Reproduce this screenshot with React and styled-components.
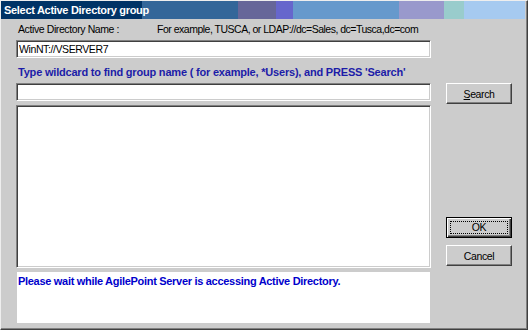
import React from 'react';
// styles
import styled, { createGlobalStyle } from 'styled-components';

const GlobalStyle = createGlobalStyle`
  html, body {
    margin: 0;
    padding: 0;
    background: #cccccc;
  }
  body {
    font-family: 'Liberation Sans', Arial, sans-serif;
    font-size: 10.5px;
    letter-spacing: -0.4px;
    color: #000;
  }
`;

const App = () => {
  return (
    <>
      <GlobalStyle />
      <Window>
        <TitleBar>Select Active Directory group</TitleBar>
        <Body>
          <LabelRow>
            <span>Active Directory Name :</span>
            <Hint>For example, TUSCA, or LDAP://dc=Sales, dc=Tusca,dc=com</Hint>
          </LabelRow>
          <Input defaultValue='WinNT://VSERVER7' />
          <BlueLabel>
            Type wildcard to find group name ( for example, *Users), and PRESS 'Search'
          </BlueLabel>
          <Input defaultValue='' />
          <Button>
            <u>S</u>earch
          </Button>
          <ListBox />
          <Buttons>
            <Button isDefault>
              <Focus>OK</Focus>
            </Button>
            <Button>Cancel</Button>
          </Buttons>
          <Status>Please wait while AgilePoint Server is accessing Active Directory.</Status>
        </Body>
      </Window>
    </>
  );
};

const Window = styled.div`
  box-sizing: border-box;
  width: 528px;
  height: 330px;
  display: flex;
  flex-direction: column;
  background: #cccccc;
  border: 1px solid;
  border-color: #eeeeee #404040 #404040 #eeeeee;
  box-shadow: inset -1px -1px 0 #808080;
  padding: 0 1px 0 0;
`;

const TitleBar = styled.div`
  height: 18px;
  line-height: 18px;
  padding-left: 3px;
  color: #fff;
  font-size: 11px;
  font-weight: bold;
  letter-spacing: -0.3px;
  white-space: nowrap;
  background: linear-gradient(
    to right,
    #003366 0 141px,
    #336699 141px 237px,
    #666699 237px 275px,
    #6666cc 275px 292px,
    #6699cc 292px 398px,
    #9999cc 398px 443px,
    #99cccc 443px 463px,
    #a6caf0 463px 524px,
    #cccccc 524px
  );
`;

const Body = styled.div`
  display: grid;
  grid-template-columns: 415px 66px;
  column-gap: 15px;
  padding-left: 15px;
  align-items: start;
`;

const LabelRow = styled.div`
  grid-column: 1 / span 2;
  display: flex;
  padding: 4px 0 0 2px;
  height: 13px;
  line-height: 13px;
  white-space: nowrap;
`;

const Hint = styled.span`
  margin-left: 38px;
  letter-spacing: -0.5px;
`;

const Input = styled.input`
  grid-column: 1;
  box-sizing: border-box;
  width: 415px;
  height: 18px;
  margin: 4px 0 0;
  padding: 0 2px;
  font: inherit;
  letter-spacing: inherit;
  background: #fff;
  border: 1px solid;
  border-color: #808080 #ffffff #ffffff #808080;
  box-shadow: inset 1px 1px 0 #404040, inset -1px -1px 0 #cccccc;
  outline: none;
`;

const BlueLabel = styled.div`
  grid-column: 1 / span 2;
  margin-top: 8px;
  padding-left: 2px;
  height: 13px;
  line-height: 13px;
  color: #1c1ca8;
  font-size: 11px;
  font-weight: bold;
  letter-spacing: -0.2px;
  white-space: nowrap;
`;

const Button = styled.button`
  grid-column: 2;
  box-sizing: border-box;
  width: 66px;
  height: 21px;
  margin-top: 4px;
  padding: 0;
  font: inherit;
  letter-spacing: inherit;
  color: #000;
  background: #cccccc;
  border: 1px solid;
  border-color: ${(p) => (p.isDefault ? '#000' : '#ffffff #404040 #404040 #ffffff')};
  box-shadow: ${(p) =>
    p.isDefault
      ? 'inset 1px 1px 0 #fff, inset -1px -1px 0 #404040, inset -2px -2px 0 #808080'
      : 'inset -1px -1px 0 #808080'};
  display: flex;
  align-items: center;
  justify-content: center;
`;

const Focus = styled.span`
  box-sizing: border-box;
  width: 58px;
  height: 13px;
  line-height: 11px;
  border: 1px dotted #000;
  text-align: center;
`;

const ListBox = styled.div`
  grid-column: 1;
  box-sizing: border-box;
  height: 163px;
  margin-top: 1px;
  background: #fff;
  border: 1px solid;
  border-color: #808080 #ffffff #ffffff #808080;
  box-shadow: inset 1px 1px 0 #404040, inset -1px -1px 0 #cccccc;
`;

const Buttons = styled.div`
  grid-column: 2;
  align-self: end;
  display: flex;
  flex-direction: column;
  gap: 3px;
  padding-bottom: 2px;
`;

const Status = styled.div`
  grid-column: 1;
  box-sizing: border-box;
  width: 413px;
  height: 51px;
  margin: 4px 0 0 1px;
  padding: 3px 1px;
  background: #fff;
  color: #0000cc;
  font-size: 11px;
  font-weight: bold;
  letter-spacing: -0.3px;
  white-space: nowrap;
`;

export default App;
